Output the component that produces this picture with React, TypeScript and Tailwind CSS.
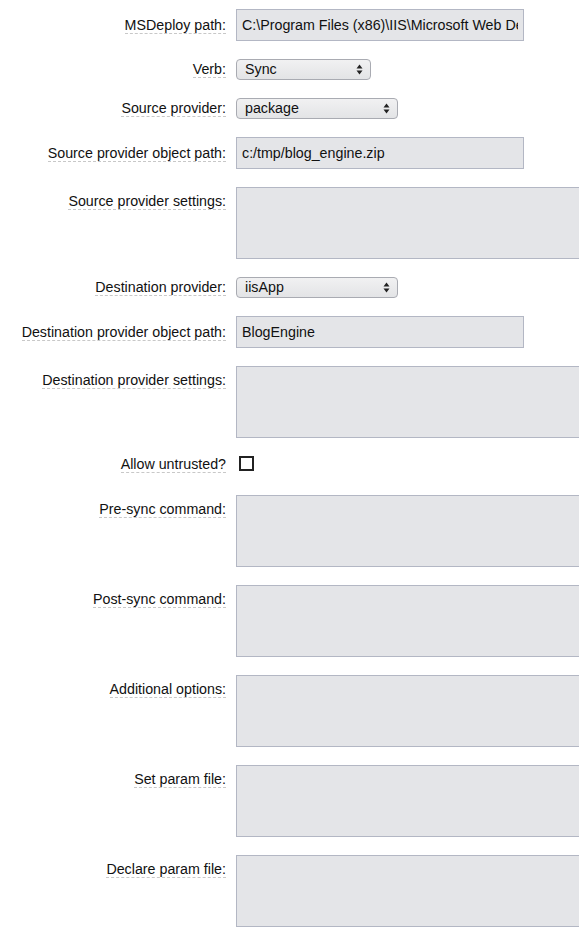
import React from 'react';

type Field =
  | { kind: 'input'; label: string; value: string }
  | { kind: 'select'; label: string; value: string; width: string }
  | { kind: 'textarea'; label: string }
  | { kind: 'checkbox'; label: string };

const fields: Field[] = [
  { kind: 'input', label: 'MSDeploy path:', value: 'C:\\Program Files (x86)\\IIS\\Microsoft Web Deploy V3\\msdeploy.exe' },
  { kind: 'select', label: 'Verb:', value: 'Sync', width: 'w-[135px]' },
  { kind: 'select', label: 'Source provider:', value: 'package', width: 'w-[162px]' },
  { kind: 'input', label: 'Source provider object path:', value: 'c:/tmp/blog_engine.zip' },
  { kind: 'textarea', label: 'Source provider settings:' },
  { kind: 'select', label: 'Destination provider:', value: 'iisApp', width: 'w-[162px]' },
  { kind: 'input', label: 'Destination provider object path:', value: 'BlogEngine' },
  { kind: 'textarea', label: 'Destination provider settings:' },
  { kind: 'checkbox', label: 'Allow untrusted?' },
  { kind: 'textarea', label: 'Pre-sync command:' },
  { kind: 'textarea', label: 'Post-sync command:' },
  { kind: 'textarea', label: 'Additional options:' },
  { kind: 'textarea', label: 'Set param file:' },
  { kind: 'textarea', label: 'Declare param file:' },
];

const Arrows = () => (
  <svg width="7" height="11" viewBox="0 0 7 11" className="absolute right-[8px] top-[5px] pointer-events-none">
    <path d="M3.5 0.5 L6.5 4.5 L0.5 4.5 Z" fill="#222" />
    <path d="M3.5 10.5 L6.5 6.5 L0.5 6.5 Z" fill="#222" />
  </svg>
);

const Control = ({ field }: { field: Field }) => {
  switch (field.kind) {
    case 'input':
      return (
        <input
          readOnly
          value={field.value}
          className="block w-[288px] h-[32px] px-[5px] bg-[#e4e5e8] border border-[#b3b7c4] text-[14.25px] text-[#111] outline-none"
        />
      );
    case 'select':
      return (
        <div className={`relative block ${field.width} h-[21px]`}>
          <select
            value={field.value}
            onChange={() => {}}
            className="block appearance-none w-full h-full pl-[8px] pr-[20px] rounded-[4px] border border-[#a9abb2] bg-gradient-to-b from-[#f1f1f2] to-[#e3e4e6] text-[14.25px] text-[#111] leading-[19px] outline-none"
          >
            <option>{field.value}</option>
          </select>
          <Arrows />
        </div>
      );
    case 'textarea':
      return (
        <textarea
          readOnly
          className="block w-[420px] h-[72px] resize-none bg-[#e4e5e8] border border-[#b3b7c4] outline-none"
        />
      );
    case 'checkbox':
      return (
        <div className="h-[21px] pl-[3px]">
          <div className="w-[15px] h-[15px] border-2 border-[#222] bg-white" />
        </div>
      );
  }
};

const labelPad = (kind: Field['kind']) => {
  if (kind === 'select') return 'pt-[2px]';
  if (kind === 'checkbox') return 'pt-0';
  if (kind === 'textarea') return 'pt-[6px]';
  return 'pt-[8px]';
};

export default function App() {
  return (
    <div className="w-[579px] h-[939px] overflow-hidden bg-white pt-[9px] font-['Liberation_Sans',Arial,sans-serif] text-[14.25px] text-[#111]">
      {fields.map((f) => (
        <div key={f.label} className="flex items-start mb-[18px]">
          <div className={`w-[226px] shrink-0 text-right leading-[16px] ${labelPad(f.kind)}`}>
            <span className="inline-block leading-[15px] border-b border-dashed border-[#c8c8c8]">
              {f.label}
            </span>
          </div>
          <div className="ml-[10px] shrink-0">
            <Control field={f} />
          </div>
        </div>
      ))}
    </div>
  );
}
